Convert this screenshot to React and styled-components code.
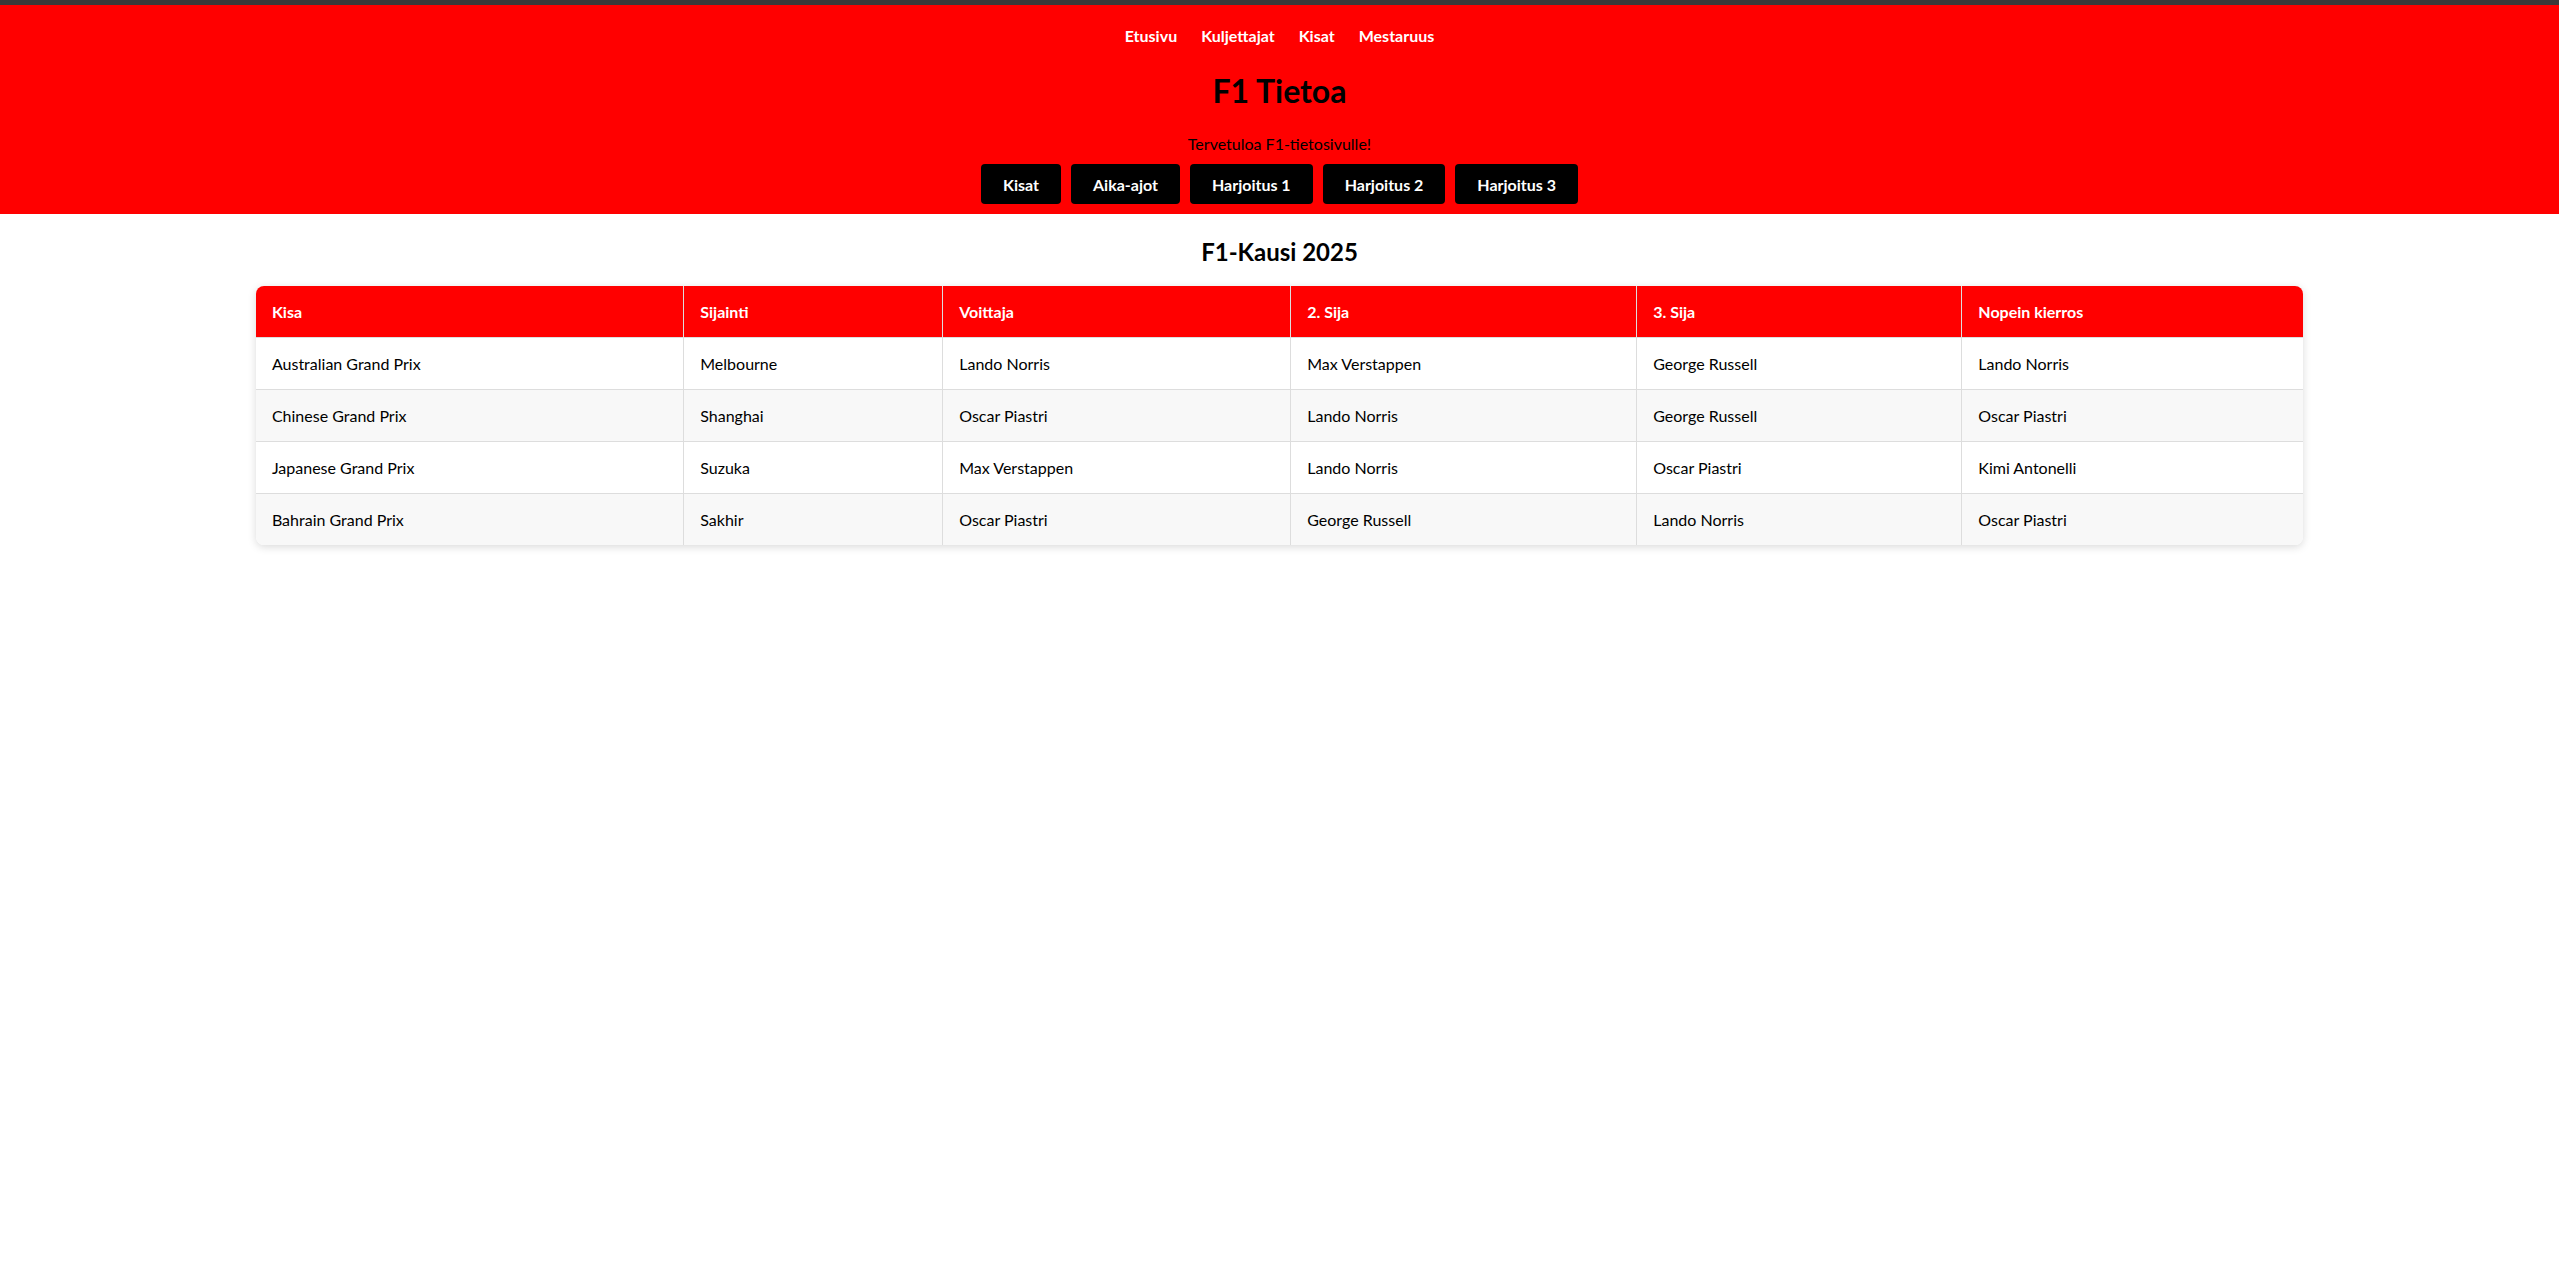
import React from "react";
import styled, { createGlobalStyle } from "styled-components";

const GlobalStyle = createGlobalStyle`
  body {
    margin: 0;
    background: #fff;
    font-family: "Lato", "Open Sans", sans-serif;
    color: #000;
  }
`;

const Header = styled.header`
  background-color: #ff0000;
  border-top: 5px solid #3a3a3a;
  text-align: center;
  padding-bottom: 10px;
`;

const Nav = styled.nav`
  display: flex;
  justify-content: center;
  gap: 24px;
  padding-top: 21px;
  line-height: 20px;
`;

const NavLink = styled.a`
  color: #fff;
  font-weight: 700;
  font-size: 16px;
  text-decoration: none;
  cursor: pointer;
`;

const Title = styled.h1`
  margin: 24px 0 0;
  font-size: 32px;
  line-height: 42px;
  font-weight: 700;
`;

const Welcome = styled.p`
  margin: 22px 0 0;
  font-size: 16px;
  line-height: 20px;
`;

const ButtonRow = styled.div`
  display: flex;
  justify-content: center;
  gap: 10px;
  margin-top: 10px;
`;

const Button = styled.button`
  height: 40px;
  padding: 0 22px;
  background-color: #000;
  color: #fff;
  border: none;
  border-radius: 4px;
  font-family: inherit;
  font-size: 16px;
  font-weight: 700;
  cursor: pointer;
`;

const Main = styled.main`
  width: 80%;
  margin: 0 auto;
  padding-bottom: 20px;
`;

const SeasonTitle = styled.h2`
  margin: 22px 0 18px;
  text-align: center;
  font-size: 24px;
  line-height: 32px;
  font-weight: 700;
`;

const TableWrap = styled.div`
  border-radius: 8px;
  overflow: hidden;
  box-shadow: 0 2px 8px rgba(0, 0, 0, 0.15);
`;

const Table = styled.table`
  width: 100%;
  border-collapse: collapse;
  table-layout: fixed;
  font-size: 16px;
`;

const Th = styled.th`
  background-color: #ff0000;
  color: #fff;
  font-weight: 700;
  text-align: left;
  padding: 0 16px;
  height: 51px;
  border-left: 1px solid #ddd;
  &:first-child {
    border-left: none;
  }
`;

const Row = styled.tr`
  background-color: ${(p) => (p.$alt ? "#f8f8f8" : "#fff")};
`;

const Td = styled.td`
  padding: 0 16px;
  height: 51px;
  border-top: 1px solid #ddd;
  border-left: 1px solid #ddd;
  &:first-child {
    border-left: none;
  }
`;

const colWidths = ["20.9%", "12.65%", "17%", "16.9%", "15.88%", "16.67%"];
const headers = ["Kisa", "Sijainti", "Voittaja", "2. Sija", "3. Sija", "Nopein kierros"];

const races = [
  ["Australian Grand Prix", "Melbourne", "Lando Norris", "Max Verstappen", "George Russell", "Lando Norris"],
  ["Chinese Grand Prix", "Shanghai", "Oscar Piastri", "Lando Norris", "George Russell", "Oscar Piastri"],
  ["Japanese Grand Prix", "Suzuka", "Max Verstappen", "Lando Norris", "Oscar Piastri", "Kimi Antonelli"],
  ["Bahrain Grand Prix", "Sakhir", "Oscar Piastri", "George Russell", "Lando Norris", "Oscar Piastri"],
];

const App = () => {
  return (
    <>
      <GlobalStyle />
      <Header>
        <Nav>
          <NavLink>Etusivu</NavLink>
          <NavLink>Kuljettajat</NavLink>
          <NavLink>Kisat</NavLink>
          <NavLink>Mestaruus</NavLink>
        </Nav>
        <Title>F1 Tietoa</Title>
        <Welcome>Tervetuloa F1-tietosivulle!</Welcome>
        <ButtonRow>
          <Button>Kisat</Button>
          <Button>Aika-ajot</Button>
          <Button>Harjoitus 1</Button>
          <Button>Harjoitus 2</Button>
          <Button>Harjoitus 3</Button>
        </ButtonRow>
      </Header>
      <Main>
        <SeasonTitle>F1-Kausi 2025</SeasonTitle>
        <TableWrap>
          <Table>
            <colgroup>
              {colWidths.map((w, i) => (
                <col key={i} style={{ width: w }} />
              ))}
            </colgroup>
            <thead>
              <tr>
                {headers.map((h) => (
                  <Th key={h}>{h}</Th>
                ))}
              </tr>
            </thead>
            <tbody>
              {races.map((race, i) => (
                <Row key={race[0]} $alt={i % 2 === 1}>
                  {race.map((cell, j) => (
                    <Td key={j}>{cell}</Td>
                  ))}
                </Row>
              ))}
            </tbody>
          </Table>
        </TableWrap>
      </Main>
    </>
  );
};

export default App;
